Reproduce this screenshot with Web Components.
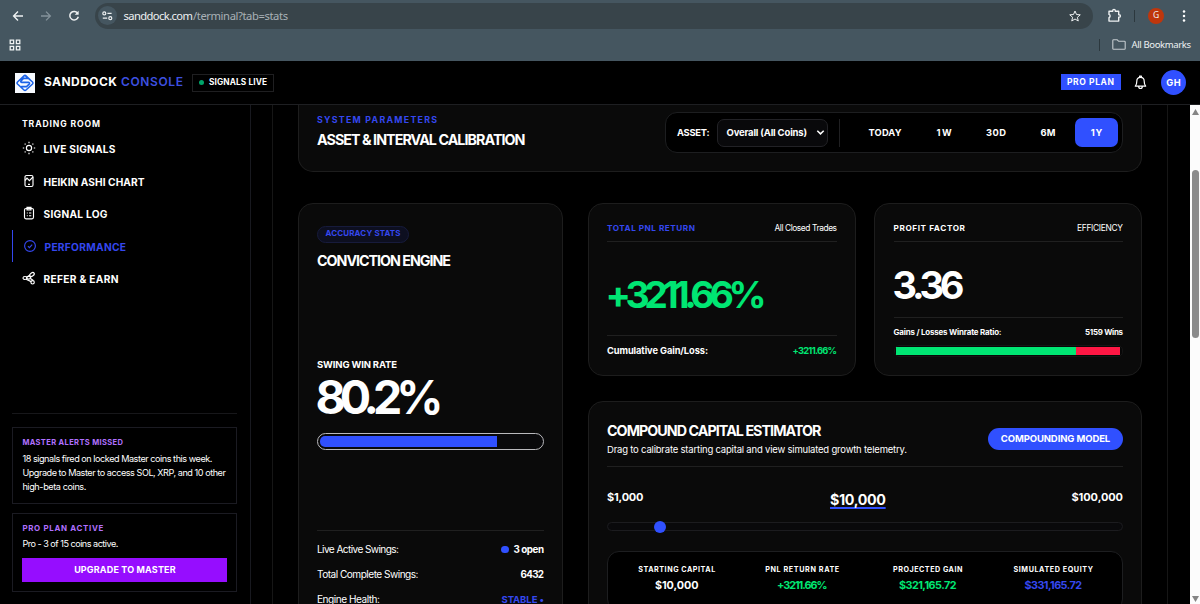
<!DOCTYPE html>
<html lang="en">
<head>
<meta charset="utf-8">
<title>Sanddock Console</title>
<style>
html,body{margin:0;height:100%;background:#000;overflow:hidden}
body{font-family:Inter,"Liberation Sans",sans-serif;color:#fff}
</style>
</head>
<body>
<sd-app></sd-app>
<script>
const make = (name, html) => customElements.define(name, class extends HTMLElement {
  constructor() {
    super();
    const t = document.createElement('template');
    t.innerHTML = '<style>*{box-sizing:border-box}:host{box-sizing:border-box}</style>' + html;
    this.attachShadow({ mode: 'open' }).append(t.content.cloneNode(true));
  }
});

make('sd-app', `
<style>
:host{display:flex;flex-direction:column;width:1200px;height:604px;overflow:hidden;background:#000}
.body{display:flex;flex:1;min-height:0}
</style>
<sd-browser></sd-browser><sd-header></sd-header>
<div class="body"><sd-sidebar></sd-sidebar><sd-main></sd-main><sd-scroll></sd-scroll></div>`);

make('sd-browser', `
<style>
:host{display:block;height:61px;background:#455660;color:#eef1f2;font-family:"Noto Sans","Open Sans",sans-serif;flex:none}
.row{display:flex;align-items:center}
.top{height:31px;padding-left:10px}
.nav{width:28px;padding-left:2px;display:flex}
.omni{margin-left:1px;width:998px;height:26px;border-radius:13px;background:#38444a;display:flex;align-items:center;padding:0 12px 0 3px}
.site{width:19px;height:19px;border-radius:50%;background:#455660;display:flex;align-items:center;justify-content:center;margin-right:6.5px}
.url{flex:1;display:flex;align-items:center}
.sep{width:1px;height:12px;background:#2c383e}
.g{width:16px;height:16px;border-radius:50%;background:#bf360c;display:flex;align-items:center;justify-content:center}
.marks{height:27px;padding:0 9px 0 9px}
svg{display:block;fill:none;stroke:currentColor}
</style>
<div class="row top">
 <div class="nav"><svg width="12" height="12" viewBox="0 0 12 12" stroke-width="1.4"><path d="M11 6H1.8M6 1.6 1.6 6 6 10.4"/></svg></div>
 <div class="nav" style="color:#84929a"><svg width="12" height="12" viewBox="0 0 12 12" stroke-width="1.3"><path d="M1 6h9.2M6 1.6 10.4 6 6 10.4"/></svg></div>
 <div class="nav"><svg width="12" height="12" viewBox="0 0 12 12" stroke-width="1.5"><path d="M9.9 3.6A4.3 4.3 0 1 0 10.3 6.8"/><path d="M10.6.8v4H6.7z" fill="currentColor" stroke="none"/></svg></div>
 <div class="omni"><span class="site"><svg width="11" height="10" viewBox="0 0 11 10" stroke-width="1.2"><circle cx="2.3" cy="2.4" r="1.5"/><path d="M5.4 2.4h4.2M.8 7.2h4.4"/><circle cx="8.3" cy="7.2" r="1.5"/></svg></span>
 <span class="url"><t-x s="11.2" w="69.5" f="400">sanddock.com</t-x><t-x s="11.2" w="95" f="400" c="#a9b2b7">/terminal?tab=stats</t-x></span>
 <svg width="12" height="12" viewBox="0 0 24 24" stroke-width="2"><path d="m12 2 3 7 7.500.6-5.700 5 1.700 7.400L12 18l-6.500 4 1.700-7.400-5.700-5L9 9z"/></svg></div>
 <svg style="margin-left:14px" width="15" height="15" viewBox="0 0 15 15" stroke-width="1.4"><path d="M2 3.300h3.700V2.700a1.300 1.300 0 0 1 2.600 0v.6h3.400v3.400h.5a1.200 1.200 0 0 1 0 2.400h-.5v4H2V9.600a1.700 1.700 0 0 0 0-3.200z" stroke-linejoin="round"/></svg>
 <div class="sep" style="margin-left:12px"></div>
 <div class="g" style="margin-left:13px"><t-x s="8.500" f="400">G</t-x></div>
 <svg style="margin-left:18px" width="4" height="12" viewBox="0 0 4 12"><g fill="#fff" stroke="none"><circle cx="2" cy="1.500" r="1.250"/><circle cx="2" cy="6" r="1.250"/><circle cx="2" cy="10.500" r="1.250"/></g></svg>
</div>
<div class="row marks">
 <svg width="12" height="12" viewBox="0 0 12 12" stroke-width="1.300"><path d="M1.200 1.200h3.400v3.400H1.200zM7.400 1.200h3.400v3.400H7.400zM1.200 7.400h3.400v3.400H1.200zM7.400 7.400h3.400v3.400H7.400z"/></svg>
 <span style="flex:1"></span><div class="sep" style="margin-right:12px"></div>
 <svg width="14" height="11" viewBox="0 0 14 11" stroke-width="1.100" style="color:#c5cccf"><path d="M.8 1.600q0-.8.8-.8h3.600l1.500 1.500h5.700q.8 0 .8.8v6.300q0 .8-.8.8H1.600q-.8 0-.8-.8z"/></svg>
 <t-x s="9.500" w="59.500" f="400" style="margin-left:5.500px">All Bookmarks</t-x>
</div>`);

make('sd-header', `
<style>
:host{display:flex;align-items:center;height:44px;border-bottom:1px solid #1e1f22;padding:0 14px 0 15px;background:#000;flex:none}
.logo{display:block;margin-right:9px}
.badge{margin-left:9px;width:82px;height:18px;border:1px solid #1f1f21;display:flex;align-items:center;padding-left:6px}
.dot{width:5px;height:5px;border-radius:50%;background:#00a56a;margin-right:5px}
.plan{width:60px;height:16px;background:#3050ff;display:flex;align-items:center;justify-content:center;margin-bottom:1px}
.av{width:25px;height:25px;border-radius:50%;background:#3050ff;display:flex;align-items:center;justify-content:center}
</style>
<svg class="logo" width="20" height="20" viewBox="0 0 20 20"><path fill="#f7faff" d="M0 0h20v20H0z"/><path d="M10 2.300 17.500 9q1 1 0 2L11 17q-1 1-2 0l-6.500-6q-1-1 0-2L9 2.900q1-.9 2 0l2.700 2.500H8.500L6 7.900q-.8 1.200.7 1.500h6.800q1.700.4.700 1.700l-2.700 2.500H6.300" fill="none" stroke="#1b62e8" stroke-width="1.600"/></svg>
<t-x s="12" w="73" f="700" style="margin-bottom:1px">SANDDOCK</t-x><t-x s="12" w="62" f="600" c="#3d50e0" style="margin:0 0 1px 4px">CONSOLE</t-x>
<div class="badge"><span class="dot"></span><t-x s="8.300" w="58" f="700">SIGNALS LIVE</t-x></div>
<span style="flex:1"></span>
<div class="plan"><t-x s="8.500" w="47" f="700">PRO PLAN</t-x></div>
<svg style="margin:0 14px 0 13.500px" width="13" height="15" viewBox="0 0 13 15" fill="none" stroke="#fff" stroke-width="1.200" stroke-linejoin="round"><path d="M1.300 11.200q1.500-1.500 1.500-5 0-3.900 3.700-3.900t3.700 3.900q0 3.500 1.500 5zM4.700 11.500q0 2 1.800 2t1.800-2M5.600 2V1h1.800v1"/></svg>
<div class="av"><t-x s="9.300" w="14.500" f="700">GH</t-x></div>`);

make('sd-nav', `
<style>
:host{display:flex;align-items:center;height:32.500px;padding-left:10px;color:#fff}
:host([active]){border-left:1.500px solid #3447ee;color:#3447ee}
::slotted(svg){width:14px;height:14px;margin-right:7.500px;fill:none;stroke:currentColor;stroke-width:1.150}
::slotted(t-x){padding-top:2px}
</style><slot name="icon"></slot><slot></slot>`);

make('sd-sidebar', `
<style>
:host{display:flex;flex-direction:column;width:251px;border-right:1px solid #18191f;padding:11.500px 13px 12px 12px;flex:none}
.title{height:15.500px;padding-left:10px;display:flex;align-items:center}
.foot{margin-top:auto;border-top:1px solid #17171a;padding-top:13px}
.box{border:1px solid #1b1b22;padding:0 9.400px;width:225px}
.l{height:14.200px;display:flex;align-items:center}
.btn{height:24px;width:205px;background:#960dff;display:flex;align-items:center;justify-content:center;margin-top:6px}
</style>
<div class="title"><t-x s="8.600" w="78" f="700">TRADING ROOM</t-x></div>
<sd-nav><svg slot="icon" viewBox="0 0 14 14"><circle cx="7" cy="7" r="2.600"/><path d="M7 .8v1.400M7 11.800v1.400M.8 7h1.400M11.800 7h1.400M2.700 2.700l.8.8M10.500 10.500l.8.8M11.300 2.700l-.8.8M2.700 11.300l.8-.8"/></svg><t-x s="10.200" w="72" f="700">LIVE SIGNALS</t-x></sd-nav>
<sd-nav><svg slot="icon" viewBox="0 0 14 14"><rect x="3" y="1.500" width="8" height="11" rx="1.500"/><path d="M3 6.500l2-2.300 2.400 2.500L11 3M6 10.300h2"/></svg><t-x s="10.200" w="101" f="700">HEIKIN ASHI CHART</t-x></sd-nav>
<sd-nav><svg slot="icon" viewBox="0 0 14 14"><rect x="2.500" y="2.500" width="9" height="10.300" rx="1.500"/><path d="M5 3.800V1.400h4v2.400zM4.800 7h1M7 7h2.300M4.800 9.700h1M7 9.700h2.300"/></svg><t-x s="10.200" w="64" f="700">SIGNAL LOG</t-x></sd-nav>
<sd-nav active><svg slot="icon" viewBox="0 0 14 14"><circle cx="7" cy="7" r="5.400"/><path d="M4.900 7.200l1.500 1.400 2.800-2.900"/></svg><t-x s="10.200" w="81.500" f="700">PERFORMANCE</t-x></sd-nav>
<sd-nav><svg slot="icon" viewBox="0 0 14 14"><ellipse cx="10" cy="3.500" rx="2.500" ry="1.600" transform="rotate(-35 10 3.500)"/><ellipse cx="3" cy="7" rx="2" ry="1.500"/><ellipse cx="6.600" cy="6.700" rx="2.100" ry="1.400"/><circle cx="10.600" cy="11.300" r="1.700"/><path d="M4 8.300l5.200 2.300M5 6l3-2M8.500 7.500l2.800 2"/></svg><t-x s="10.200" w="75" f="700">REFER &amp; EARN</t-x></sd-nav>
<div class="foot">
 <div class="box" style="height:77px;padding-top:6.500px"><div class="l" style="height:16px"><t-x s="7.500" w="100.500" f="700" c="#b070ff">MASTER ALERTS MISSED</t-x></div>
 <div style="height:1.500px"></div>
 <div class="l"><t-x s="9.100" w="190" f="400">18 signals fired on locked Master coins this week.</t-x></div>
 <div class="l"><t-x s="9.100" w="203.500" f="400">Upgrade to Master to access SOL, XRP, and 10 other</t-x></div>
 <div class="l"><t-x s="9.100" w="64" f="400">high-beta coins.</t-x></div></div>
 <div class="box" style="height:79px;margin-top:9px;padding-top:7px"><div class="l" style="height:16px"><t-x s="7.900" w="81" f="700" c="#b070ff">PRO PLAN ACTIVE</t-x></div>
 <div class="l" style="height:15px"><t-x s="9.100" w="96" f="400">Pro - 3 of 15 coins active.</t-x></div>
 <div class="btn"><t-x s="9" w="101.500" f="700">UPGRADE TO MASTER</t-x></div></div>
</div>`);

make('sd-card', `
<style>
:host{display:block;background:#0a0a0a;border:1px solid #1d1d1d;border-radius:15px;padding:0 18px;min-width:0}
</style><slot></slot>`);

make('sd-line', `
<style>
:host{display:flex;align-items:center;justify-content:space-between}
:host([rule]){border-bottom:1px solid #202020}
</style><slot></slot>`);

make('sd-calibration', `
<style>
:host{display:block}
sd-card{height:67px;border-top:0;border-radius:0 0 15px 15px;display:flex;justify-content:space-between}
.t{padding-top:7px}
.ctl{margin-top:7px;width:458px;height:41px;background:#000;border:1px solid #1d1e20;border-radius:12px;display:flex;align-items:center;padding:0 4px 0 11px}
.sel{margin-left:7px;width:111px;height:28px;border:1px solid #222226;border-radius:7px;background:#09090b;display:flex;align-items:center;padding:0 2px 0 9px;justify-content:space-between}
.v{width:1px;height:28px;background:#202022;margin:0 7px 0 11px}
.tab{height:29px;border-radius:7px;display:flex;align-items:center;justify-content:center}
</style>
<sd-card><div class="t"><sd-line style="height:17px"><t-x s="8.800" w="120" f="700" c="#3548f0">SYSTEM PARAMETERS</t-x></sd-line><sd-line style="height:22px"><t-x s="14.300" w="208.500" f="700">ASSET &amp; INTERVAL CALIBRATION</t-x></sd-line></div>
<div class="ctl"><t-x s="9.300" w="32.500" f="700">ASSET:</t-x>
<div class="sel"><t-x s="9.500" w="80.500" f="700">Overall (All Coins)</t-x><svg width="9" height="7" viewBox="0 0 9 7" fill="none" stroke="#fff" stroke-width="1.500"><path d="m1.300 1.700 3.200 3.200 3.200-3.200"/></svg></div>
<div class="v"></div>
<div class="tab" style="width:77px"><t-x s="9.300" w="33" f="700">TODAY</t-x></div>
<div class="tab" style="width:41px"><t-x s="9.300" w="15" f="700">1W</t-x></div>
<div class="tab" style="width:63px"><t-x s="9.300" w="20" f="700">30D</t-x></div>
<div class="tab" style="width:41px"><t-x s="9.300" w="15" f="700">6M</t-x></div>
<div class="tab" style="width:43px;margin-left:auto;background:#3050ff"><t-x s="9.300" w="11.500" f="700">1Y</t-x></div>
</div></sd-card>`);

make('sd-conviction', `
<style>
:host{display:block}
sd-card{height:440px;padding-top:21.500px}
.pill{width:92px;height:17px;border-radius:9px;border:1px solid #171b3c;background:#0d0f20;display:flex;align-items:center;justify-content:center}
.bar{height:17px;width:226.500px;border:1px solid #b9b9bd;border-radius:9px;padding:2px;overflow:hidden;background:#09090b}
.bar i{display:block;height:11px;width:177px;background:#3050ff;border-radius:5px 0 0 5px}
.dot{width:7.500px;height:7.500px;border-radius:50%;background:#3050ff;margin-right:5px}
.r{display:flex;align-items:center}
</style>
<sd-card>
<div class="pill"><t-x s="7.900" w="75" f="700" c="#3548f0">ACCURACY STATS</t-x></div>
<sd-line style="height:36px"><t-x s="14.300" w="134" f="700">CONVICTION ENGINE</t-x></sd-line>
<div style="height:79px"></div>
<sd-line style="height:14px"><t-x s="9.500" w="80" f="700">SWING WIN RATE</t-x></sd-line>
<sd-line style="height:52px"><t-x s="46.500" w="128" f="700" style="margin-left:-1.500px">80.2%</t-x></sd-line>
<div style="height:9.500px"></div>
<div class="bar"><i></i></div>
<sd-line rule style="height:81px"></sd-line><div style="height:6px"></div>
<sd-line style="height:25px"><t-x s="10.100" w="82" f="400">Live Active Swings:</t-x><span class="r"><i class="dot"></i><t-x s="9.800" w="30.500" f="700">3 open</t-x></span></sd-line>
<sd-line style="height:25px"><t-x s="10.100" w="101.500" f="400">Total Complete Swings:</t-x><t-x s="9.800" w="23.500" f="700">6432</t-x></sd-line>
<sd-line style="height:25px"><t-x s="10.100" w="63" f="400">Engine Health:</t-x><t-x s="9.500" w="42.500" f="700" c="#3548f0">STABLE •</t-x></sd-line>
</sd-card>`);

make('sd-pnl', `
<style>:host{display:block}sd-card{height:173px;padding-top:12px}</style>
<sd-card>
<sd-line rule style="height:26px"><t-x s="8.200" w="88" f="700" c="#3548f0">TOTAL PNL RETURN</t-x><t-x s="8.400" w="62.500" f="400">All Closed Trades</t-x></sd-line>
<sd-line rule style="height:94px;padding-top:12px"><t-x s="37.500" w="161" f="700" c="#00e673" style="margin-left:-1.500px">+3211.66%</t-x></sd-line>
<sd-line style="height:30px"><t-x s="9.300" w="101" f="700">Cumulative Gain/Loss:</t-x><t-x s="9.300" w="44.500" f="700" c="#00e673">+3211.66%</t-x></sd-line>
</sd-card>`);

make('sd-profit', `
<style>:host{display:block}sd-card{height:173px;padding:12px 18px 0 18.500px}
.bar{height:12px;border:1px solid #151515;border-radius:5px;background:#070707;display:flex;padding:1px 2px 1px 1.500px;margin-top:-1.500px}
.bar i{display:block;height:8px}</style>
<sd-card>
<sd-line rule style="height:26px"><t-x s="8.200" w="71.500" f="700">PROFIT FACTOR</t-x><t-x s="8.400" w="46" f="400">EFFICIENCY</t-x></sd-line>
<sd-line rule style="height:76px;padding-top:13px"><t-x s="38" w="72" f="700" style="margin-left:-1px">3.36</t-x></sd-line>
<sd-line style="height:28px;padding-top:1px"><t-x s="7.900" w="108" f="700">Gains / Losses Winrate Ratio:</t-x><t-x s="7.900" w="38" f="700">5159 Wins</t-x></sd-line>
<div class="bar"><i style="width:180px;background:#00e673"></i><i style="flex:1;background:#ff1744"></i></div>
</sd-card>`);

make('sd-stat', `
<style>:host{display:flex;flex-direction:column;align-items:center}div{height:16px;display:flex;align-items:center}</style>
<div><slot name="label"></slot></div><div><slot></slot></div>`);

make('sd-estimator', `
<style>
:host{display:block}
sd-card{height:250px;padding-top:17px}
.head{display:flex;justify-content:space-between;align-items:center;height:48px;border-bottom:1px solid #202020;padding-bottom:6px}
.btn{width:135px;height:22px;border-radius:11px;background:#3050ff;display:flex;align-items:center;justify-content:center;margin-bottom:1px}
.range{display:grid;grid-template-columns:1fr auto 1fr;height:50px;align-items:center;padding-top:2px}
.track{height:9px;border:1px solid #1c1c1f;border-radius:5px;background:#09090b;display:flex;align-items:center;padding-left:46px}
.track i{width:12px;height:12px;flex:none;border-radius:50%;background:#3050ff}
.stats{margin-top:20px;height:60px;border:1px solid #1d1e20;border-radius:12px;background:#000;padding:10px 6px;display:grid;grid-template-columns:repeat(4,1fr)}
</style>
<sd-card>
<div class="head"><div><sd-line style="height:20px"><t-x s="14.300" w="214.500" f="700">COMPOUND CAPITAL ESTIMATOR</t-x></sd-line><sd-line style="height:18px"><t-x s="9.500" w="300" f="400">Drag to calibrate starting capital and view simulated growth telemetry.</t-x></sd-line></div>
<div class="btn"><t-x s="9.500" w="109.500" f="700">COMPOUNDING MODEL</t-x></div></div>
<div style="height:5px"></div>
<div class="range"><t-x s="11" w="36.500" f="700">$1,000</t-x><t-x s="14.300" w="56" f="700" u style="margin-top:4px;margin-left:-14px">$10,000</t-x><t-x s="11" w="51.500" f="700" style="justify-self:end">$100,000</t-x></div>
<div class="track"><i></i></div>
<div class="stats">
<sd-stat><t-x slot="label" s="7.200" w="77" f="700">STARTING CAPITAL</t-x><t-x s="10.800" w="43.500" f="700">$10,000</t-x></sd-stat>
<sd-stat><t-x slot="label" s="7.200" w="74" f="700">PNL RETURN RATE</t-x><t-x s="10.800" w="50.500" f="700" c="#00e673">+3211.66%</t-x></sd-stat>
<sd-stat><t-x slot="label" s="7.200" w="69.500" f="700">PROJECTED GAIN</t-x><t-x s="10.800" w="57.500" f="700" c="#00e673">$321,165.72</t-x></sd-stat>
<sd-stat><t-x slot="label" s="7.200" w="79.500" f="700">SIMULATED EQUITY</t-x><t-x s="10.800" w="57.500" f="700" c="#3548f0">$331,165.72</t-x></sd-stat>
</div></sd-card>`);

make('sd-main', `
<style>
:host{display:block;flex:1;min-width:0;height:499px;padding-left:21px;overflow:hidden}
.wrap{width:896px;height:499px;border:solid #161616;border-width:0 1px;padding:0 25px 0 25px;overflow:hidden}
.grid{display:grid;grid-template-columns:265px 554px;column-gap:25px;margin-top:31px;align-items:start}
.right{display:grid;grid-template-columns:268px 268px;column-gap:18px;row-gap:25px}
sd-estimator{grid-column:span 2}
</style>
<div class="wrap"><sd-calibration></sd-calibration>
<div class="grid"><sd-conviction></sd-conviction><div class="right"><sd-pnl></sd-pnl><sd-profit></sd-profit><sd-estimator></sd-estimator></div></div></div>`);

make('sd-scroll', `
<style>
:host{display:flex;flex-direction:column;align-items:center;width:10px;background:#fcfcfc;flex:none;padding-top:4px}
.th{width:7px;height:168px;border-radius:4px;background:#8b8b8b;margin-top:55px}
svg{display:block;fill:#858585}
</style>
<svg width="7" height="6" viewBox="0 0 7 6"><path d="M3.500 0 7 6H0z"/></svg><div class="th"></div><span style="flex:1"></span><svg style="margin-bottom:2px" width="7" height="6" viewBox="0 0 7 6"><path d="M3.500 6 7 0H0z"/></svg>`);

// Single-line label: s = font size, f = weight, c = colour, w = width the tracking is fitted to.
customElements.define('t-x', class extends HTMLElement {
  constructor() {
    super();
    this.attachShadow({ mode: 'open' }).innerHTML = `<style>
:host{display:inline-block;white-space:pre;line-height:1.2;flex:none;width:max-content}
:host([u]) span{text-decoration:underline;text-decoration-color:#3050ff;text-decoration-thickness:1.500px;text-underline-offset:2px}
</style><span><slot></slot></span>`;
  }
  connectedCallback() {
    const a = n => this.getAttribute(n), st = this.style;
    st.fontSize = a('s') + 'px';
    st.fontWeight = a('f') || 400;
    if (a('c')) st.color = a('c');
    const w = parseFloat(a('w')), n = this.textContent.length;
    if (!w || n < 2) return;
    const ls = (w - this.getBoundingClientRect().width) / (n - 1);
    st.letterSpacing = ls + 'px';
    this.shadowRoot.querySelector('span').style.marginRight = -ls + 'px';
  }
});
</script>
</body>
</html>
